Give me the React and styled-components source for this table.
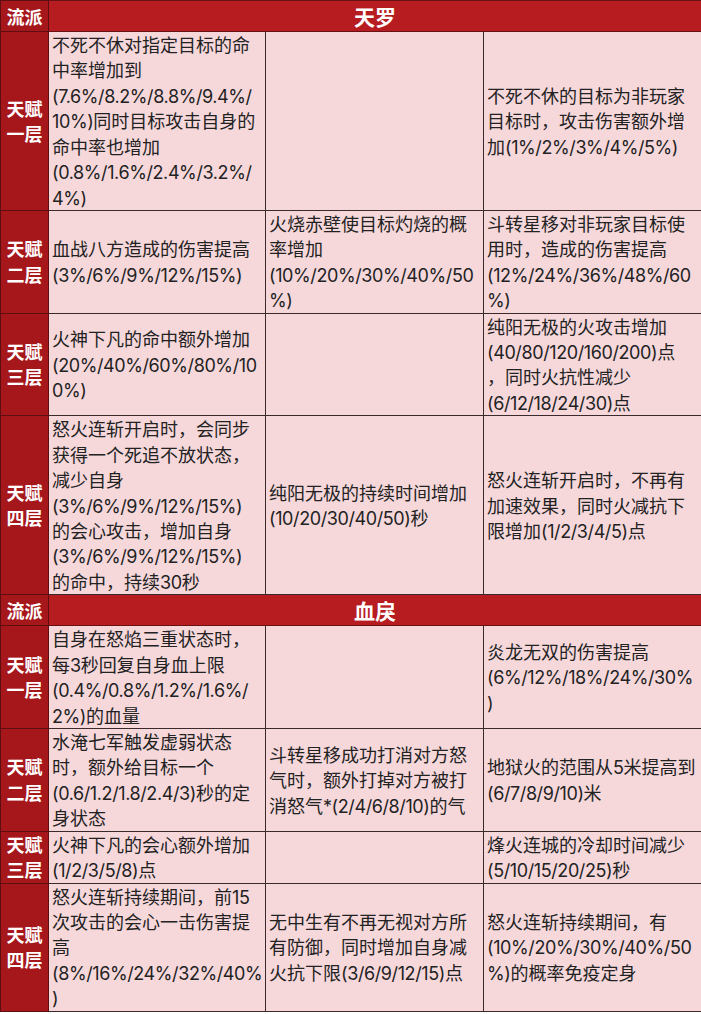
import React from 'react'
import styled, {createGlobalStyle} from 'styled-components';

const GlobalStyle = createGlobalStyle`
body {
    margin:0;
    background:#fff;
    font-family:"Noto Sans CJK SC",sans-serif;
}
`

const Table = styled.table`
width:701px;
table-layout:fixed;
border-collapse:collapse;
font-size:18px;
color:#222;
td {
    border:1px solid #3a2a2b;
    padding:0;
    vertical-align:middle;
}
`

const HeadRow = styled.tr`
height:31px;
background-color:#b71c21;
color:#fff;
font-weight:700;
td {
    border-color:#6a1013;
}
`

const SideCell = styled.td`
background-color:#a6171c;
color:#fff;
font-weight:700;
text-align:center;
font-size:18px;
border-color:#5e0e11 !important;
`

const Title = styled.td`
text-align:center;
font-size:21px;
`

const Cell = styled.td`
background-color:#f6d8db;
padding:0 3px !important;
`

const Line = styled.div`
white-space:nowrap;
height:25.43px;
line-height:25.43px;
overflow:visible;
`

const Latin = styled.span`
font-family:Inter,"Noto Sans CJK SC",sans-serif;
letter-spacing:-0.4px;
`

const sections = [
    {
        name: '天罗',
        rows: [
            {
                label: ['天赋', '一层'],
                cells: [
                    ['不死不休对指定目标的命', '中率增加到', '(7.6%/8.2%/8.8%/9.4%/', '10%)同时目标攻击自身的', '命中率也增加', '(0.8%/1.6%/2.4%/3.2%/', '4%)'],
                    [],
                    ['不死不休的目标为非玩家', '目标时，攻击伤害额外增', '加(1%/2%/3%/4%/5%)'],
                ],
            },
            {
                label: ['天赋', '二层'],
                cells: [
                    ['血战八方造成的伤害提高', '(3%/6%/9%/12%/15%)'],
                    ['火烧赤壁使目标灼烧的概', '率增加', '(10%/20%/30%/40%/50', '%)'],
                    ['斗转星移对非玩家目标使', '用时，造成的伤害提高', '(12%/24%/36%/48%/60', '%)'],
                ],
            },
            {
                label: ['天赋', '三层'],
                cells: [
                    ['火神下凡的命中额外增加', '(20%/40%/60%/80%/10', '0%)'],
                    [],
                    ['纯阳无极的火攻击增加', '(40/80/120/160/200)点', '，同时火抗性减少', '(6/12/18/24/30)点'],
                ],
            },
            {
                label: ['天赋', '四层'],
                cells: [
                    ['怒火连斩开启时，会同步', '获得一个死追不放状态，', '减少自身', '(3%/6%/9%/12%/15%)', '的会心攻击，增加自身', '(3%/6%/9%/12%/15%)', '的命中，持续30秒'],
                    ['纯阳无极的持续时间增加', '(10/20/30/40/50)秒'],
                    ['怒火连斩开启时，不再有', '加速效果，同时火减抗下', '限增加(1/2/3/4/5)点'],
                ],
            },
        ],
    },
    {
        name: '血戾',
        rows: [
            {
                label: ['天赋', '一层'],
                cells: [
                    ['自身在怒焰三重状态时，', '每3秒回复自身血上限', '(0.4%/0.8%/1.2%/1.6%/', '2%)的血量'],
                    [],
                    ['炎龙无双的伤害提高', '(6%/12%/18%/24%/30%', ')'],
                ],
            },
            {
                label: ['天赋', '二层'],
                cells: [
                    ['水淹七军触发虚弱状态', '时，额外给目标一个', '(0.6/1.2/1.8/2.4/3)秒的定', '身状态'],
                    ['斗转星移成功打消对方怒', '气时，额外打掉对方被打', '消怒气*(2/4/6/8/10)的气'],
                    ['地狱火的范围从5米提高到', '(6/7/8/9/10)米'],
                ],
            },
            {
                label: ['天赋', '三层'],
                cells: [
                    ['火神下凡的会心额外增加', '(1/2/3/5/8)点'],
                    [],
                    ['烽火连城的冷却时间减少', '(5/10/15/20/25)秒'],
                ],
            },
            {
                label: ['天赋', '四层'],
                cells: [
                    ['怒火连斩持续期间，前15', '次攻击的会心一击伤害提', '高', '(8%/16%/24%/32%/40%', ')'],
                    ['无中生有不再无视对方所', '有防御，同时增加自身减', '火抗下限(3/6/9/12/15)点'],
                    ['怒火连斩持续期间，有', '(10%/20%/30%/40%/50', '%)的概率免疫定身'],
                ],
            },
        ],
    },
]

// split a line so ascii runs get the latin face
const renderText = (text) =>
    text.split(/([\x20-\x7E]+)/).filter(Boolean).map((part, i) =>
        /^[\x20-\x7E]+$/.test(part) ? <Latin key={i}>{part}</Latin> : part
    )

const App = () => {
    return (
        <>
        <GlobalStyle />
        <Table>
            <colgroup>
                <col style={{width: '48px'}} />
                <col style={{width: '217px'}} />
                <col style={{width: '218px'}} />
                <col style={{width: '218px'}} />
            </colgroup>
            <tbody>
                {sections.map(section => (
                    <React.Fragment key={section.name}>
                        <HeadRow>
                            <SideCell>流派</SideCell>
                            <Title colSpan={3}>{section.name}</Title>
                        </HeadRow>
                        {section.rows.map((row, i) => (
                            <tr key={i}>
                                <SideCell>
                                    {row.label.map(l => <Line key={l}>{l}</Line>)}
                                </SideCell>
                                {row.cells.map((lines, j) => (
                                    <Cell key={j}>
                                        {lines.map((l, k) => <Line key={k}>{renderText(l)}</Line>)}
                                    </Cell>
                                ))}
                            </tr>
                        ))}
                    </React.Fragment>
                ))}
            </tbody>
        </Table>
        </>
    )
}

export default App
